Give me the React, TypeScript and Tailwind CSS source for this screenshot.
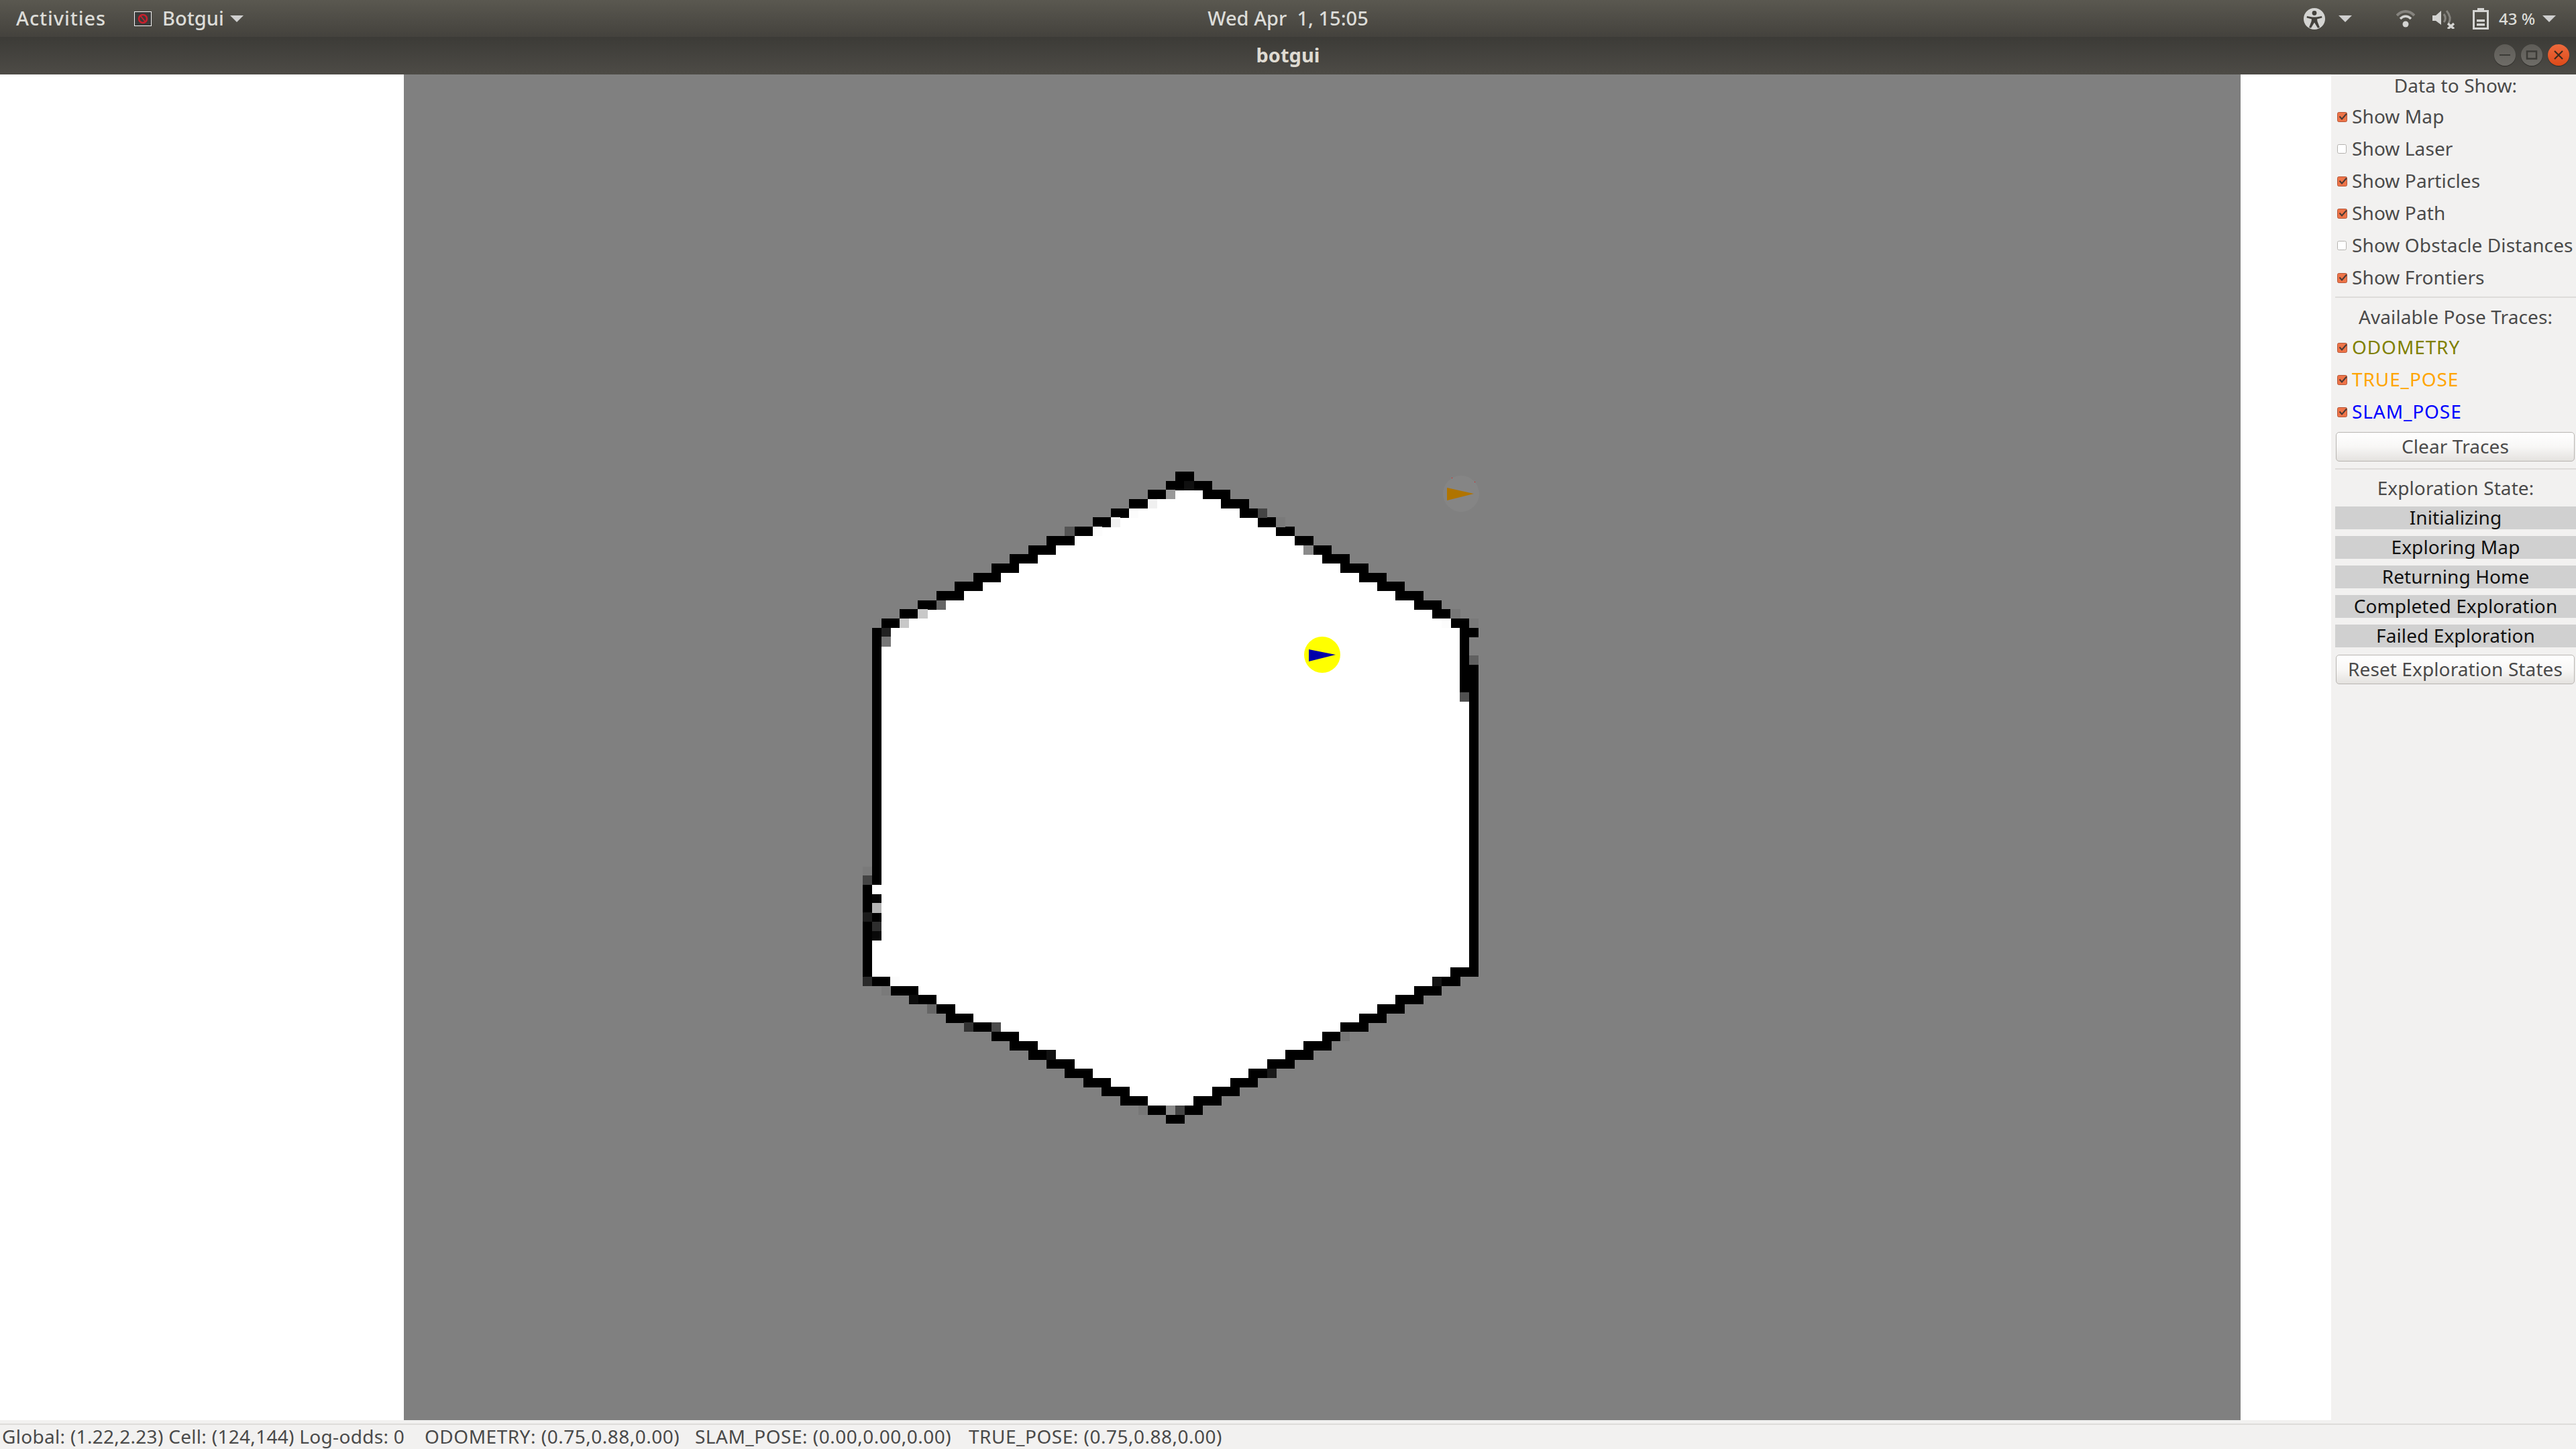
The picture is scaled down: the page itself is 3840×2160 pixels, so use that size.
import type { ReactNode } from "react";

// occupancy grid of the map, in cells: row -> black runs [from, to]
const P = 13.69;
const X0 = 1300;
const Y0 = 703;

const topRows: number[][][] = [
  [[33, 34]],
  [[32, 36]],
  [[30, 31], [36, 38]],
  [[28, 29], [38, 40]],
  [[26, 27], [40, 41]],
  [[24, 25], [42, 43]],
  [[22, 23], [44, 45]],
  [[19, 21], [46, 47]],
  [[17, 19], [48, 49]],
  [[15, 17], [49, 51]],
  [[13, 15], [51, 53]],
  [[11, 13], [53, 55]],
  [[9, 11], [55, 57]],
  [[7, 9], [57, 59]],
  [[5, 6], [59, 61]],
  [[3, 4], [61, 62]],
  [[1, 2], [63, 64]],
  [[0, 0], [64, 65]],
  [[0, 0], [64, 64]],
  [[0, 0], [64, 64]],
  [[0, 0], [64, 64]],
  [[0, 0], [64, 65]],
  [[0, 0], [64, 65]],
  [[0, 0], [64, 65]],
];

const lowRows: number[][][] = [
  [[-1, -1], [65, 65]],
  [[-1, -1], [65, 65]],
  [[-1, -1], [65, 65]],
  [[0, 0], [65, 65]],
  [[-1, -1], [65, 65]],
  [[-1, -1], [65, 65]],
  [[-1, -1], [65, 65]],
  [[-1, -1], [65, 65]],
  [[-1, -1], [65, 65]],
  [[-1, -1], [63, 65]],
  [[0, 1], [62, 63]],
  [[2, 4], [59, 61]],
  [[5, 6], [57, 59]],
  [[7, 8], [55, 57]],
  [[8, 10], [53, 55]],
  [[11, 12], [51, 53]],
  [[13, 15], [49, 50]],
  [[15, 17], [47, 49]],
  [[17, 18], [45, 47]],
  [[19, 21], [43, 45]],
  [[21, 23], [41, 42]],
  [[23, 25], [39, 41]],
  [[25, 27], [37, 39]],
  [[27, 29], [35, 37]],
  [[30, 31], [34, 35]],
  [[32, 33]],
];

const grid = [...topRows, ...Array.from({ length: 21 }, () => [[0, 0], [65, 65]]), ...lowRows];

// partly known cells: [col, row, colour]
const shades: [number, number, string][] = [
  [34, 1, "#101010"], [32, 2, "#999999"], [30, 3, "#f0f0f0"], [28, 4, "#fcfcfc"], [42, 4, "#444444"],
  [26, 5, "#f0f0f0"], [44, 5, "#7a7a7a"], [21, 6, "#555555"], [24, 6, "#fcfcfc"], [47, 8, "#8a8a8a"],
  [7, 14, "#666666"], [5, 15, "#c8c8c8"], [63, 15, "#777777"], [3, 16, "#c8c8c8"], [65, 16, "#7a7a7a"],
  [62, 16, "#fcfcfc"], [1, 17, "#222222"], [1, 18, "#777777"], [65, 20, "#606060"], [64, 24, "#505050"],
  [-1, 43, "#7a7a7a"], [-1, 44, "#444444"], [0, 46, "#050505"], [0, 47, "#b4b4b4"], [-1, 48, "#1a1a1a"],
  [0, 49, "#2e2e2e"], [0, 50, "#090909"], [-1, 55, "#2a2a2a"], [2, 55, "#fcfcfc"], [61, 55, "#141414"],
  [1, 56, "#7a7a7a"], [4, 57, "#0c0c0c"], [6, 58, "#666666"], [10, 60, "#333333"], [13, 60, "#4c4c4c"],
  [51, 61, "#777777"], [19, 63, "#111111"], [43, 65, "#1a1a1a"], [29, 69, "#777777"], [32, 69, "#8a8a8a"],
  [33, 69, "#444444"],
];

function Cell({ c, r, n = 1, fill }: { c: number; r: number; n?: number; fill: string }) {
  return <rect x={X0 + c * P} y={Y0 + r * P} width={n * P + 0.4} height={P + 0.4} fill={fill} />;
}

function MapView() {
  return (
    <svg className="block h-full w-full" viewBox="602 111 2738 2006" shapeRendering="crispEdges">
      {grid.map((runs, r) => {
        const from = runs[0][0];
        const to = runs[runs.length - 1][1];
        return <Cell key={r} c={from} r={r} n={to - from + 1} fill="#ffffff" />;
      })}
      {grid.map((runs, r) =>
        runs.map(([a, b]) => <Cell key={`${r}-${a}`} c={a} r={r} n={b - a + 1} fill="#000000" />)
      )}
      {shades.map(([c, r, fill]) => (
        <Cell key={`s${c}-${r}`} c={c} r={r} fill={fill} />
      ))}
      <g shapeRendering="auto">
        <circle cx="2178" cy="736" r="27" fill="#858585" />
        <polygon points="2157,727 2197,736 2157,746" fill="#b07400" />
        <circle cx="1971" cy="976" r="27" fill="#ffff00" />
        <polygon points="1951,968 1991,976 1951,986" fill="#0000aa" />
      </g>
      <rect x="2164" y="712" width="1" height="1" fill="#ff0000" />
      <rect x="2198" y="718" width="1" height="1" fill="#ff0000" />
    </svg>
  );
}

function Arrow({ className }: { className: string }) {
  return (
    <svg className={className} width="20" height="10" viewBox="0 0 20 10">
      <polygon points="0,0 20,0 10,10" fill="#cfcfcf" />
    </svg>
  );
}

function TopBar() {
  return (
    <div className="relative flex h-[55px] items-center bg-gradient-to-b from-[#5a5850] to-[#44423d] pl-[24px] pr-[30px] text-[29px] leading-[40px] font-medium text-[#dcdcd8]">
      <span className="w-[176px] pb-[2px] tracking-[0.9px]">Activities</span>
      <svg width="26" height="22" viewBox="0 0 26 22" className="mr-[16px]">
        <rect x="0.5" y="0.5" width="25" height="21" fill="#3a3a3a" stroke="#f2f2f2" />
        <circle cx="13" cy="11" r="6" fill="none" stroke="#c8202c" strokeWidth="2.5" />
        <line x1="9" y1="6" x2="17" y2="16" stroke="#c8202c" strokeWidth="2" />
      </svg>
      <span className="w-[101px] pb-[2px]">Botgui</span>
      <Arrow className="" />
      <div className="absolute left-[1780px] top-0 flex h-[55px] w-[280px] items-center justify-center whitespace-nowrap pb-[2px]">
        Wed Apr&nbsp;&nbsp;1, 15:05
      </div>
      <div className="ml-auto flex items-center">
        <svg width="32" height="32" viewBox="0 0 32 32">
          <circle cx="16" cy="16" r="16" fill="#d4d4d2" />
          <circle cx="16" cy="7.5" r="3.4" fill="#44423d" />
          <path d="M5 12 L13 13.5 H19 L27 12 L27.5 14.5 L20 16.5 L20.5 20 L24 29 L21 29.8 L16 21.5 L11 29.8 L8 29 L11.5 20 L12 16.5 L4.5 14.5 Z" fill="#44423d" />
        </svg>
        <Arrow className="ml-[20px]" />
        <svg className="ml-[66px]" width="28" height="26" viewBox="0 0 28 26">
          <path d="M1 8 C9 0 19 0 27 8" fill="none" stroke="#85837e" strokeWidth="4" />
          <path d="M6 13 C11 8 17 8 22 13" fill="none" stroke="#d4d4d2" strokeWidth="3.5" />
          <circle cx="14" cy="21" r="4.5" fill="#d4d4d2" />
        </svg>
        <svg className="ml-[26px]" width="33" height="30" viewBox="0 0 33 30">
          <path d="M0 10 H5 L13 3 V24 L5 18 H0 Z" fill="#d4d4d2" />
          <path d="M17 8 C20 12 20 17 17 20" fill="none" stroke="#85837e" strokeWidth="3" />
          <path d="M21 3 C27 10 27 17 24 22" fill="none" stroke="#85837e" strokeWidth="3" />
          <path d="M23 22 L32 30 M32 22 L23 30" stroke="#d4d4d2" strokeWidth="3.5" />
        </svg>
        <svg className="ml-[27px]" width="24" height="32" viewBox="0 0 24 32">
          <path d="M7 0 H17 V3 H24 V32 H0 V3 H7 Z M3 6 V29 H21 V6 Z" fill="#d4d4d2" fillRule="evenodd" />
          <rect x="6" y="17" width="12" height="3.5" fill="#d4d4d2" />
          <rect x="6" y="23" width="12" height="3.5" fill="#d4d4d2" />
        </svg>
        <span className="ml-[15px] w-[65px] whitespace-nowrap text-[24px]">43 %</span>
        <Arrow className="" />
      </div>
    </div>
  );
}

function WinButton({ bg, children }: { bg: string; children: ReactNode }) {
  return (
    <div className={`flex h-[32px] w-[32px] items-center justify-center rounded-full shadow-[0_1px_1px_#2c2b28] ${bg}`}>
      <svg width="18" height="18" viewBox="0 0 18 18">
        {children}
      </svg>
    </div>
  );
}

function TitleBar() {
  return (
    <div className="relative flex h-[56px] items-center justify-center bg-gradient-to-b from-[#3c3b37] to-[#4d4b46] pb-[2px] text-[29px] font-bold text-[#dfdbd2]">
      botgui
      <div className="absolute right-[10px] top-[11px] flex gap-[8px]">
        <WinButton bg="bg-gradient-to-b from-[#5e5c57] to-[#6e6c67]">
          <rect x="1" y="8" width="16" height="2" fill="#3c3b37" />
        </WinButton>
        <WinButton bg="bg-gradient-to-b from-[#5e5c57] to-[#6e6c67]">
          <rect x="2" y="3.5" width="14" height="11" fill="none" stroke="#3c3b37" strokeWidth="2.5" />
        </WinButton>
        <WinButton bg="bg-gradient-to-b from-[#ee6a3c] to-[#dd4a18]">
          <path d="M3 3 L15 15 M15 3 L3 15" stroke="#3c2a1e" strokeWidth="2.2" />
        </WinButton>
      </div>
    </div>
  );
}

function Check({ label, checked, color = "text-[#4a4a4a]" }: { label: string; checked: boolean; color?: string }) {
  return (
    <div className={`flex h-[48px] items-center pl-[3px] ${color}`}>
      {checked ? (
        <svg width="15" height="15" viewBox="0 0 15 15" className="mr-[7px] shrink-0">
          <rect x="0.5" y="0.5" width="14" height="14" rx="2" fill="#ee7448" stroke="#b5583a" />
          <path d="M3.5 6.5 L7 10.5 L14 2.5" fill="none" stroke="#4a3a35" strokeWidth="2" />
        </svg>
      ) : (
        <svg width="15" height="15" viewBox="0 0 15 15" className="mr-[7px] shrink-0">
          <rect x="0.5" y="0.5" width="13" height="13" rx="2" fill="#ffffff" stroke="#b4b2ae" />
        </svg>
      )}
      <span className="whitespace-nowrap pb-[2px]">{label}</span>
    </div>
  );
}

function Heading({ children, className = "" }: { children: ReactNode; className?: string }) {
  return <div className={`flex h-[34px] items-center justify-center pb-[2px] text-[#4a4a4a] ${className}`}>{children}</div>;
}

function PanelButton({ children, className = "" }: { children: ReactNode; className?: string }) {
  return (
    <div
      className={`ml-[1px] mr-[2px] flex h-[44px] items-center justify-center rounded-[5px] border border-[#b8b5b1] bg-gradient-to-b from-[#ffffff] via-[#f8f7f6] to-[#e4e2df] pb-[2px] text-[#4a4a4a] ${className}`}
    >
      {children}
    </div>
  );
}

function StateBar({ children }: { children: ReactNode }) {
  return <div className="flex h-[34px] items-center justify-center bg-[#d0d0d0] pb-[2px] text-[#111111]">{children}</div>;
}

function SidePanel() {
  return (
    <div className="flex w-[365px] shrink-0 flex-col bg-[#f2f1f0] pl-[6px] text-[28px] leading-[32px] tracking-[0.1px]">
      <Heading>Data to Show:</Heading>
      <div className="mt-[5px]">
        <Check label="Show Map" checked />
        <Check label="Show Laser" checked={false} />
        <Check label="Show Particles" checked />
        <Check label="Show Path" checked />
        <Check label="Show Obstacle Distances" checked={false} />
        <Check label="Show Frontiers" checked />
      </div>
      <div className="mt-[4px] h-[2px] bg-[#dedcda]" />
      <Heading className="mt-[12px]">Available Pose Traces:</Heading>
      <div className="mt-[4px] tracking-[0.9px]">
        <Check label="ODOMETRY" checked color="text-[#808000]" />
        <Check label="TRUE_POSE" checked color="text-[#ffa500]" />
        <Check label="SLAM_POSE" checked color="text-[#0000ff]" />
      </div>
      <PanelButton className="mt-[6px]">Clear Traces</PanelButton>
      <div className="mt-[10px] h-[2px] bg-[#dedcda]" />
      <Heading className="mt-[11px]">Exploration State:</Heading>
      <div className="mt-[10px] flex flex-col gap-[10px]">
        <StateBar>Initializing</StateBar>
        <StateBar>Exploring Map</StateBar>
        <StateBar>Returning Home</StateBar>
        <StateBar>Completed Exploration</StateBar>
        <StateBar>Failed Exploration</StateBar>
      </div>
      <PanelButton className="mt-[11px]">Reset Exploration States</PanelButton>
    </div>
  );
}

function StatusBar() {
  return (
    <div className="h-[43px] bg-[#f2f1f0] pt-[5px]">
      <div className="h-[2px] bg-[#dedcda]" />
      <div className="flex h-[34px] items-center pl-[3px] text-[28px] leading-[34px] tracking-[0.3px] text-[#4a4a4a]">
        <span className="w-[630px] whitespace-nowrap">Global: (1.22,2.23) Cell: (124,144) Log-odds: 0</span>
        <span className="w-[403px] whitespace-nowrap tracking-[0.5px]">ODOMETRY: (0.75,0.88,0.00)</span>
        <span className="w-[408px] whitespace-nowrap tracking-[0.5px]">SLAM_POSE: (0.00,0.00,0.00)</span>
        <span className="whitespace-nowrap tracking-[0.5px]">TRUE_POSE: (0.75,0.88,0.00)</span>
      </div>
    </div>
  );
}

export default function App() {
  return (
    <div className="flex h-[2160px] w-[3840px] flex-col overflow-hidden bg-white font-['Noto_Sans',sans-serif]">
      <TopBar />
      <TitleBar />
      <div className="flex min-h-0 flex-1">
        <div className="w-[602px] shrink-0 bg-white" />
        <div className="w-[2738px] shrink-0 bg-[#808080]">
          <MapView />
        </div>
        <div className="w-[135px] shrink-0 bg-white" />
        <SidePanel />
      </div>
      <StatusBar />
    </div>
  );
}
